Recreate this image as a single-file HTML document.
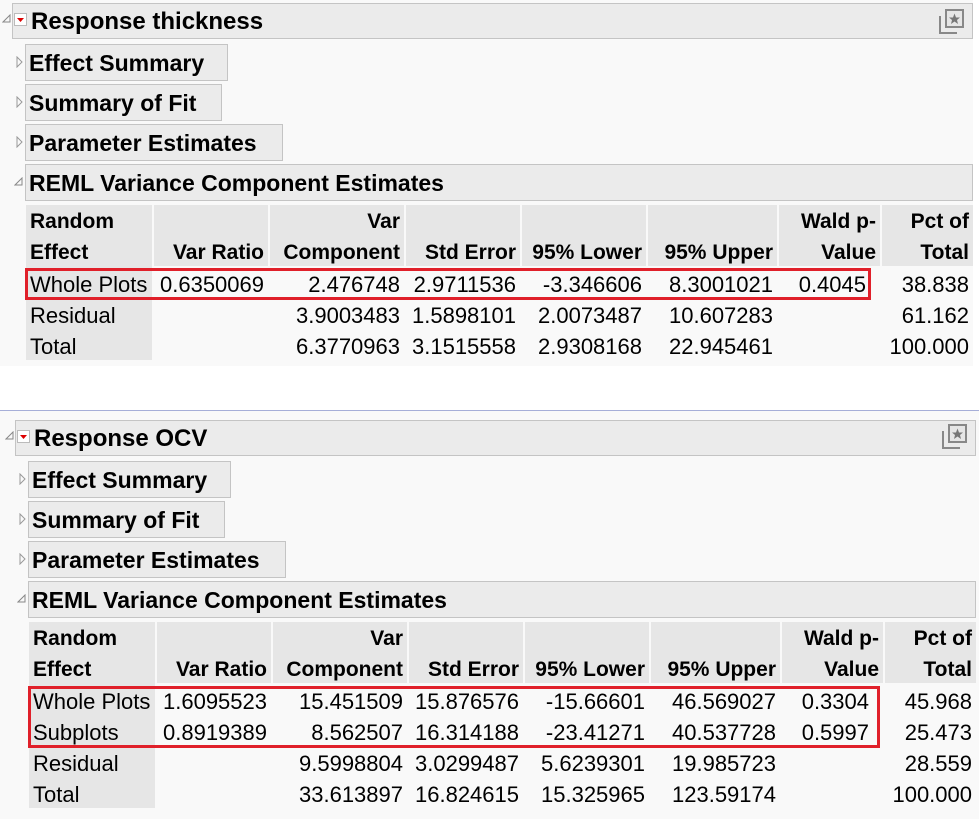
<!DOCTYPE html>
<html><head><meta charset="utf-8"><style>
body{margin:0;width:979px;height:819px;background:#fff;position:relative;overflow:hidden;font-family:"Liberation Sans",sans-serif;color:#000}
.a{position:absolute}
.blk{background:#f9f9f9}
.bar{background:#ebebeb;border:1px solid #c4c4c4;box-sizing:border-box;font-weight:bold;font-size:23px;line-height:37px;padding-left:3px;white-space:nowrap}
.tb{font-size:24px;line-height:36px}
.hd{background:#e6e6e6;font-weight:bold;font-size:21px;line-height:31px;text-align:right;padding-right:4px;padding-top:1px;box-sizing:border-box;white-space:nowrap}
.lc{background:#e6e6e6}
.c{font-size:22px;line-height:33px;text-align:right;box-sizing:border-box;padding-right:4px;white-space:nowrap}
.red{border:3px solid #e0202a;box-sizing:border-box}
</style></head><body>

<!-- Block 1 -->
<div class="a blk" style="left:0;top:0;width:973px;height:366px"></div>
<div class="a bar tb" style="left:12px;top:3px;width:961px;height:36px;padding-left:18px">Response thickness</div>
<svg class="a" style="left:2px;top:14px" width="10" height="10"><path d="M1 8 L8 8 L8 1 Z" fill="none" stroke="#888" stroke-width="1"/></svg>
<svg class="a" style="left:14px;top:13px" width="14" height="14"><rect x="0.5" y="0.5" width="12" height="12" fill="#fff" stroke="#bbb"/><path d="M3 5 L10 5 L6.5 9 Z" fill="#d00"/></svg>
<svg class="a" style="left:938px;top:8px" width="28" height="28"><rect x="8" y="2" width="17" height="17" fill="#e6e6e6" stroke="#888" stroke-width="2"/><path d="M2 8 V25 H19" fill="none" stroke="#888" stroke-width="2"/><path d="M16.5 5.5 L18 9.5 L22 9.5 L19 12 L20 16 L16.5 13.5 L13 16 L14 12 L11 9.5 L15 9.5 Z" fill="#777"/></svg>

<svg class="a" style="left:16px;top:56px" width="8" height="12"><path d="M1 1 L6 6 L1 11 Z" fill="none" stroke="#999"/></svg>
<div class="a bar" style="left:25px;top:44px;width:203px;height:37px">Effect Summary</div>
<svg class="a" style="left:16px;top:96px" width="8" height="12"><path d="M1 1 L6 6 L1 11 Z" fill="none" stroke="#999"/></svg>
<div class="a bar" style="left:25px;top:84px;width:197px;height:37px">Summary of Fit</div>
<svg class="a" style="left:16px;top:136px" width="8" height="12"><path d="M1 1 L6 6 L1 11 Z" fill="none" stroke="#999"/></svg>
<div class="a bar" style="left:25px;top:124px;width:258px;height:37px">Parameter Estimates</div>
<svg class="a" style="left:14px;top:177px" width="10" height="10"><path d="M1 8 L8 8 L8 1 Z" fill="none" stroke="#888"/></svg>
<div class="a bar" style="left:25px;top:164px;width:948px;height:37px">REML Variance Component Estimates</div>

<div class="a lc" style="left:26px;top:205px;width:126px;height:155px"></div>
<div class="a hd" style="left:26px;top:205px;width:126px;height:61px;text-align:left;padding-left:4px">Random<br>Effect</div>
<div class="a hd" style="left:154px;top:205px;width:114px;height:61px;padding-top:32px">Var Ratio</div>
<div class="a hd" style="left:270px;top:205px;width:134px;height:61px">Var<br>Component</div>
<div class="a hd" style="left:406px;top:205px;width:114px;height:61px;padding-top:32px">Std Error</div>
<div class="a hd" style="left:522px;top:205px;width:124px;height:61px;padding-top:32px">95% Lower</div>
<div class="a hd" style="left:648px;top:205px;width:129px;height:61px;padding-top:32px">95% Upper</div>
<div class="a hd" style="left:779px;top:205px;width:101px;height:61px">Wald p-<br>Value</div>
<div class="a hd" style="left:882px;top:205px;width:91px;height:61px">Pct of<br>Total</div>

<div class="a" style="left:0;top:268px">
<div class="a c" style="left:26px;width:126px;text-align:left;padding-left:4px">Whole Plots</div>
<div class="a c" style="left:154px;width:114px">0.6350069</div>
<div class="a c" style="left:270px;width:134px">2.476748</div>
<div class="a c" style="left:406px;width:114px">2.9711536</div>
<div class="a c" style="left:522px;width:124px">-3.346606</div>
<div class="a c" style="left:648px;width:129px">8.3001021</div>
<div class="a c" style="left:779px;width:101px;padding-right:14px">0.4045</div>
<div class="a c" style="left:882px;width:91px">38.838</div>
</div>
<div class="a" style="left:0;top:299px">
<div class="a c" style="left:26px;width:126px;text-align:left;padding-left:4px">Residual</div>
<div class="a c" style="left:270px;width:134px">3.9003483</div>
<div class="a c" style="left:406px;width:114px">1.5898101</div>
<div class="a c" style="left:522px;width:124px">2.0073487</div>
<div class="a c" style="left:648px;width:129px">10.607283</div>
<div class="a c" style="left:882px;width:91px">61.162</div>
</div>
<div class="a" style="left:0;top:330px">
<div class="a c" style="left:26px;width:126px;text-align:left;padding-left:4px">Total</div>
<div class="a c" style="left:270px;width:134px">6.3770963</div>
<div class="a c" style="left:406px;width:114px">3.1515558</div>
<div class="a c" style="left:522px;width:124px">2.9308168</div>
<div class="a c" style="left:648px;width:129px">22.945461</div>
<div class="a c" style="left:882px;width:91px">100.000</div>
</div>
<div class="a red" style="left:25px;top:268px;width:846px;height:32px"></div>

<div class="a" style="left:0;top:410px;width:979px;height:1px;background:#a6aed8"></div>

<!-- Block 2 -->
<div class="a blk" style="left:0;top:411px;width:979px;height:408px"></div>
<div class="a bar tb" style="left:15px;top:420px;width:961px;height:36px;padding-left:18px">Response OCV</div>
<svg class="a" style="left:5px;top:431px" width="10" height="10"><path d="M1 8 L8 8 L8 1 Z" fill="none" stroke="#888"/></svg>
<svg class="a" style="left:17px;top:430px" width="14" height="14"><rect x="0.5" y="0.5" width="12" height="12" fill="#fff" stroke="#bbb"/><path d="M3 5 L10 5 L6.5 9 Z" fill="#d00"/></svg>
<svg class="a" style="left:941px;top:423px" width="28" height="28"><rect x="8" y="2" width="17" height="17" fill="#e6e6e6" stroke="#888" stroke-width="2"/><path d="M2 8 V25 H19" fill="none" stroke="#888" stroke-width="2"/><path d="M16.5 5.5 L18 9.5 L22 9.5 L19 12 L20 16 L16.5 13.5 L13 16 L14 12 L11 9.5 L15 9.5 Z" fill="#777"/></svg>

<svg class="a" style="left:19px;top:473px" width="8" height="12"><path d="M1 1 L6 6 L1 11 Z" fill="none" stroke="#999"/></svg>
<div class="a bar" style="left:28px;top:461px;width:203px;height:37px">Effect Summary</div>
<svg class="a" style="left:19px;top:513px" width="8" height="12"><path d="M1 1 L6 6 L1 11 Z" fill="none" stroke="#999"/></svg>
<div class="a bar" style="left:28px;top:501px;width:197px;height:37px">Summary of Fit</div>
<svg class="a" style="left:19px;top:553px" width="8" height="12"><path d="M1 1 L6 6 L1 11 Z" fill="none" stroke="#999"/></svg>
<div class="a bar" style="left:28px;top:541px;width:258px;height:37px">Parameter Estimates</div>
<svg class="a" style="left:17px;top:594px" width="10" height="10"><path d="M1 8 L8 8 L8 1 Z" fill="none" stroke="#888"/></svg>
<div class="a bar" style="left:28px;top:581px;width:948px;height:37px">REML Variance Component Estimates</div>

<div class="a lc" style="left:29px;top:622px;width:126px;height:186px"></div>
<div class="a hd" style="left:29px;top:622px;width:126px;height:61px;text-align:left;padding-left:4px">Random<br>Effect</div>
<div class="a hd" style="left:157px;top:622px;width:114px;height:61px;padding-top:32px">Var Ratio</div>
<div class="a hd" style="left:273px;top:622px;width:134px;height:61px">Var<br>Component</div>
<div class="a hd" style="left:409px;top:622px;width:114px;height:61px;padding-top:32px">Std Error</div>
<div class="a hd" style="left:525px;top:622px;width:124px;height:61px;padding-top:32px">95% Lower</div>
<div class="a hd" style="left:651px;top:622px;width:129px;height:61px;padding-top:32px">95% Upper</div>
<div class="a hd" style="left:782px;top:622px;width:101px;height:61px">Wald p-<br>Value</div>
<div class="a hd" style="left:885px;top:622px;width:91px;height:61px">Pct of<br>Total</div>

<div class="a" style="left:0;top:685px">
<div class="a c" style="left:29px;width:126px;text-align:left;padding-left:4px">Whole Plots</div>
<div class="a c" style="left:157px;width:114px">1.6095523</div>
<div class="a c" style="left:273px;width:134px">15.451509</div>
<div class="a c" style="left:409px;width:114px">15.876576</div>
<div class="a c" style="left:525px;width:124px">-15.66601</div>
<div class="a c" style="left:651px;width:129px">46.569027</div>
<div class="a c" style="left:782px;width:101px;padding-right:14px">0.3304</div>
<div class="a c" style="left:885px;width:91px">45.968</div>
</div>
<div class="a" style="left:0;top:716px">
<div class="a c" style="left:29px;width:126px;text-align:left;padding-left:4px">Subplots</div>
<div class="a c" style="left:157px;width:114px">0.8919389</div>
<div class="a c" style="left:273px;width:134px">8.562507</div>
<div class="a c" style="left:409px;width:114px">16.314188</div>
<div class="a c" style="left:525px;width:124px">-23.41271</div>
<div class="a c" style="left:651px;width:129px">40.537728</div>
<div class="a c" style="left:782px;width:101px;padding-right:14px">0.5997</div>
<div class="a c" style="left:885px;width:91px">25.473</div>
</div>
<div class="a" style="left:0;top:747px">
<div class="a c" style="left:29px;width:126px;text-align:left;padding-left:4px">Residual</div>
<div class="a c" style="left:273px;width:134px">9.5998804</div>
<div class="a c" style="left:409px;width:114px">3.0299487</div>
<div class="a c" style="left:525px;width:124px">5.6239301</div>
<div class="a c" style="left:651px;width:129px">19.985723</div>
<div class="a c" style="left:885px;width:91px">28.559</div>
</div>
<div class="a" style="left:0;top:778px">
<div class="a c" style="left:29px;width:126px;text-align:left;padding-left:4px">Total</div>
<div class="a c" style="left:273px;width:134px">33.613897</div>
<div class="a c" style="left:409px;width:114px">16.824615</div>
<div class="a c" style="left:525px;width:124px">15.325965</div>
<div class="a c" style="left:651px;width:129px">123.59174</div>
<div class="a c" style="left:885px;width:91px">100.000</div>
</div>
<div class="a red" style="left:28px;top:686px;width:852px;height:62px"></div>
</body></html>
